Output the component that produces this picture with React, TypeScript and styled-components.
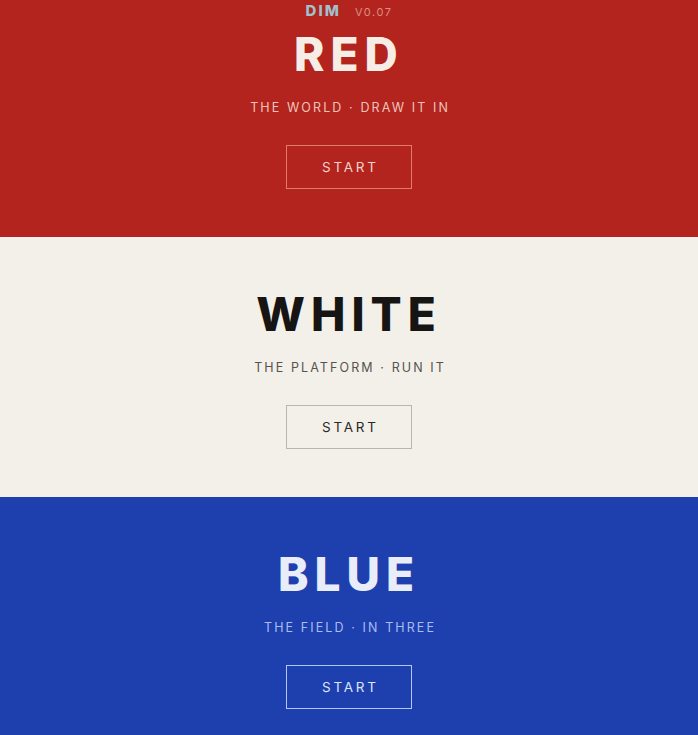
import styled, { createGlobalStyle } from "styled-components";

const GlobalStyle = createGlobalStyle`
  html, body {
    margin: 0;
    padding: 0;
  }
  body {
    font-family: Inter, "Noto Sans", sans-serif;
    background: #f3f0e9;
    overflow: hidden;
  }
`;

type Tone = {
  bg: string;
  title: string;
  sub: string;
  border: string;
  button: string;
};

const tones: Record<string, Tone> = {
  red: { bg: "#b2241d", title: "#f6ede6", sub: "#efc3ba", border: "#e2796d", button: "#f3d2ca" },
  white: { bg: "#f3f0e9", title: "#161513", sub: "#56534e", border: "#bbb6ad", button: "#2a2926" },
  blue: { bg: "#1e3fae", title: "#e9edf9", sub: "#a8bdf1", border: "#b3c6f5", button: "#dbe4fb" },
};

const Page = styled.main`
  position: relative;
  display: flex;
  flex-direction: column;
  height: 735px;
`;

const Brand = styled.header`
  position: absolute;
  top: 0;
  left: 0;
  right: 0;
  display: flex;
  justify-content: center;
  align-items: baseline;
  gap: 14px;
  padding-top: 1px;
`;

const BrandName = styled.span`
  font-size: 15px;
  font-weight: 800;
  letter-spacing: 2px;
  color: #9fc0cc;
`;

const BrandVersion = styled.span`
  font-size: 11px;
  letter-spacing: 1.5px;
  color: #de8e84;
`;

const Band = styled.section<{ $tone: Tone; $height: number; $top: number }>`
  height: ${(p) => p.$height}px;
  flex-shrink: 0;
  background: ${(p) => p.$tone.bg};
  display: flex;
  flex-direction: column;
  align-items: center;
  padding-top: ${(p) => p.$top}px;
  box-sizing: border-box;
  overflow: hidden;
`;

const Title = styled.h1<{ $tone: Tone }>`
  margin: 0;
  font-size: 46px;
  line-height: 46px;
  font-weight: 800;
  letter-spacing: 6px;
  color: ${(p) => p.$tone.title};
`;

const Tagline = styled.p<{ $tone: Tone }>`
  margin: 23px 0 0;
  font-size: 12.5px;
  line-height: 16px;
  letter-spacing: 2.1px;
  padding-left: 2.1px;
  color: ${(p) => p.$tone.sub};
`;

const StartButton = styled.button<{ $tone: Tone }>`
  margin-top: 29px;
  width: 126px;
  height: 44px;
  background: transparent;
  border: 1px solid ${(p) => p.$tone.border};
  color: ${(p) => p.$tone.button};
  font-family: Inter, "Noto Sans", sans-serif;
  font-size: 13.5px;
  letter-spacing: 2.8px;
  padding: 0 0 0 2.8px;
  cursor: pointer;
`;

const bands = [
  { key: "red", title: "RED", tagline: "THE WORLD · DRAW IT IN", height: 237, top: 31 },
  { key: "white", title: "WHITE", tagline: "THE PLATFORM · RUN IT", height: 260, top: 54 },
  { key: "blue", title: "BLUE", tagline: "THE FIELD · IN THREE", height: 238, top: 54 },
];

export default function App() {
  return (
    <>
      <GlobalStyle />
      <Page>
        {bands.map((b) => (
          <Band key={b.key} $tone={tones[b.key]} $height={b.height} $top={b.top}>
            <Title $tone={tones[b.key]}>{b.title}</Title>
            <Tagline $tone={tones[b.key]}>{b.tagline}</Tagline>
            <StartButton $tone={tones[b.key]}>START</StartButton>
          </Band>
        ))}
        <Brand>
          <BrandName>DIM</BrandName>
          <BrandVersion>V0.07</BrandVersion>
        </Brand>
      </Page>
    </>
  );
}
